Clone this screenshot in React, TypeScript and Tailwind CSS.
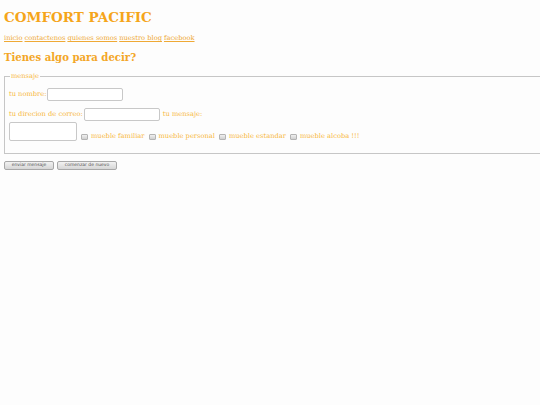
export default function App() {
  const muebles = ["mueble familiar", "mueble personal", "mueble estandar", "mueble alcoba !!!"];

  return (
    <div className="min-h-screen overflow-hidden bg-[#fdfdfd] p-[4px] font-['DejaVu_Serif',serif] text-[6.7px] text-[#f7b83e]">
      <h1 className="mt-[5px] text-[13.5px] font-bold leading-[16px] text-[#f5a51a]">COMFORT PACIFIC</h1>

      <nav className="mt-[9px] flex gap-[2px] leading-[9px]">
        <a href="#" className="underline text-[#efa935]">inicio</a>
        <a href="#" className="underline text-[#efa935]">contactenos</a>
        <a href="#" className="underline text-[#efa935]">quienes somos</a>
        <a href="#" className="underline text-[#efa935]">nuestro blog</a>
        <a href="#" className="underline text-[#efa935]">facebook</a>
      </nav>

      <h2 className="mt-[8.5px] text-[10.1px] font-bold leading-[12px] text-[#f3a626]">Tienes algo para decir?</h2>

      <form>
        <fieldset className="mt-[8px] w-[600px] border border-[#c6c6c6] px-[4px] pb-[12px]">
          <legend className="ml-[1px] px-[1px] leading-[9px]">mensaje</legend>

          <div className="mt-[7px] flex h-[13px] items-center gap-[1px]">
            <label>tu nombre:</label>
            <input type="text" className="h-[13px] w-[76px] rounded-[2px] border border-[#c8c8c8] bg-white" />
          </div>

          <div className="mt-[7px] flex h-[13px] items-center gap-[1px]">
            <label>tu direcion de correo:</label>
            <input type="text" className="h-[13px] w-[76px] rounded-[2px] border border-[#c8c8c8] bg-white" />
            <label className="ml-[2px]">tu mensaje:</label>
          </div>

          <div className="mt-[1px] flex items-end">
            <textarea className="h-[19px] w-[68px] resize-none rounded-[2px] border border-[#c8c8c8] bg-white" />
            {muebles.map((m) => (
              <label key={m} className="ml-[4px] flex items-end gap-[3px] leading-[9px]">
                <span className="mb-[1px] h-[6px] w-[7px] rounded-[1px] border border-[#b4b4b4] bg-gradient-to-b from-[#f0f0f0] to-[#d0d0d0]" />
                <span>{m}</span>
              </label>
            ))}
          </div>
        </fieldset>

        <div className="mt-[7px] flex gap-[3px] font-['DejaVu_Sans',sans-serif] text-[4.5px] text-[#555]">
          <button type="submit" className="h-[9px] w-[50px] rounded-[2px] border border-[#a8a8a8] bg-gradient-to-b from-[#f2f2f2] to-[#d6d6d6]">
            enviar mensaje
          </button>
          <button type="reset" className="h-[9px] w-[60px] rounded-[2px] border border-[#a8a8a8] bg-gradient-to-b from-[#f2f2f2] to-[#d6d6d6]">
            comenzar de nuevo
          </button>
        </div>
      </form>
    </div>
  );
}
